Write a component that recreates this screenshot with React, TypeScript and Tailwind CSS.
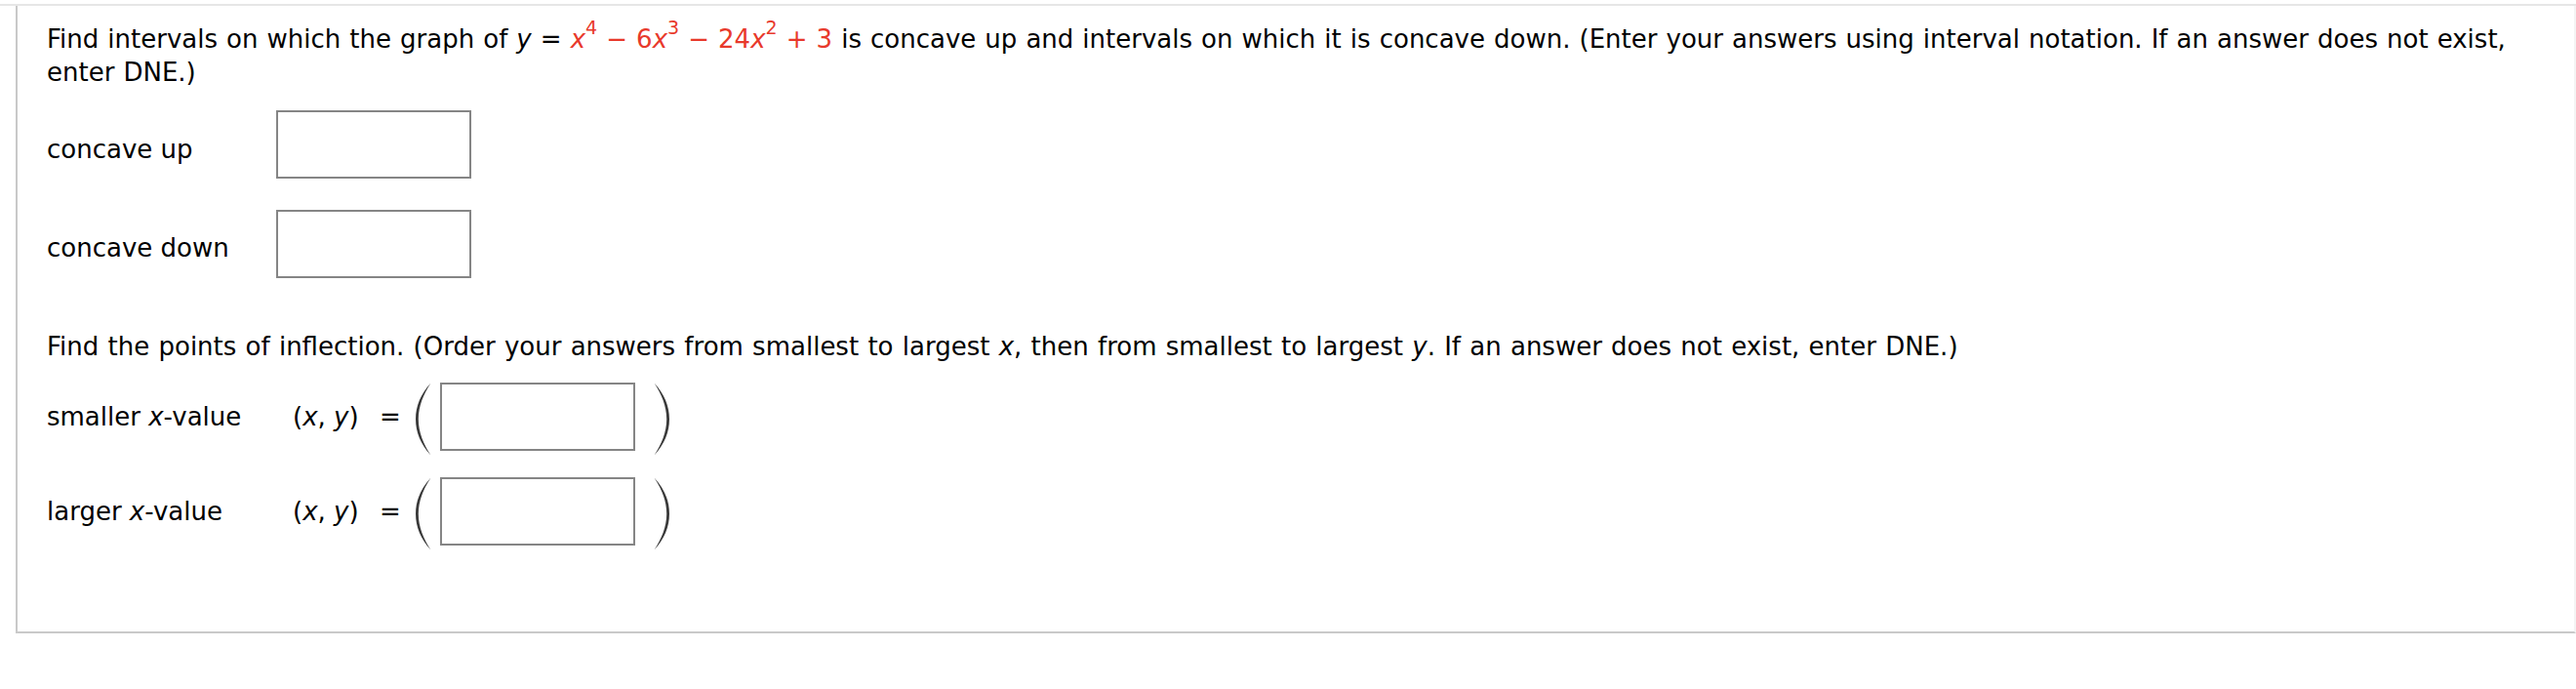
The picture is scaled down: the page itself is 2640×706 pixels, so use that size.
import React from "react";

const RED = "text-[#e8392b]";

const Sup = ({ children }: { children: React.ReactNode }) => (
  <span className="relative -top-[14px] text-[19px] leading-none">
    {children}
  </span>
);

const Paren = ({ side }: { side: "left" | "right" }) => (
  <svg
    width="18"
    height="75"
    viewBox="0 0 18 75"
    className={side === "right" ? "-scale-x-100" : ""}
  >
    <path
      d="M16.5 0.5 C6 12 1 24 1 37.5 C1 51 6 63 16.5 74.5 C9 63 3.8 51 3.8 37.5 C3.8 24 9 12 16.5 0.5 Z"
      fill="#3a3a3a"
    />
  </svg>
);

const AnswerBox = () => (
  <input
    type="text"
    className="h-[70px] w-[200px] border-2 border-[#858585] bg-white outline-none"
  />
);

const IntervalRow = ({ label, offset }: { label: string; offset: string }) => (
  <div className="flex items-start">
    <span className={`w-[235px] ${offset}`}>{label}</span>
    <AnswerBox />
  </div>
);

const PointRow = ({ label }: { label: string }) => (
  <div className="flex h-[75px] items-start">
    <span className="mt-[18px] w-[252px]">
      {label} <i>x</i>-value
    </span>
    <span className="mt-[18px] w-[89px]">
      (<i>x</i>, <i>y</i>)
    </span>
    <span className="mt-[18px]">=</span>
    <div className="ml-[14px] flex items-start">
      <Paren side="left" />
      <div className="ml-[8px]">
        <AnswerBox />
      </div>
      <div className="ml-[18px]">
        <Paren side="right" />
      </div>
    </div>
  </div>
);

export default function App() {
  return (
    <div className="min-h-[706px] bg-white pt-1 font-['DejaVu_Sans','Verdana',sans-serif] text-[26px] leading-[34px] text-black">
      <div className="h-[2px] bg-[#e6e6e6]" />
      <div className="ml-4 border-b-2 border-l-2 border-r-2 border-b-[#c9c9c9] border-l-[#c9c9c9] border-r-[#f4f4f4] pb-[83px] pl-[30px] pr-[40px] pt-[17px]">
        <p className="[word-spacing:0.8px]">
          Find intervals on which the graph of <i>y</i> ={" "}
          <span className={RED}>
            <i>x</i>
            <Sup>4</Sup> − 6<i>x</i>
            <Sup>3</Sup> − 24<i>x</i>
            <Sup>2</Sup> + 3
          </span>{" "}
          is concave up and intervals on which it is concave down. (Enter your
          answers using interval notation. If an answer does not exist, enter
          DNE.)
        </p>

        <div className="mt-[22px] flex flex-col gap-[32px]">
          <IntervalRow label="concave up" offset="mt-[23px]" />
          <IntervalRow label="concave down" offset="mt-[22px]" />
        </div>

        <p className="mt-[53px] [word-spacing:1px]">
          Find the points of inflection. (Order your answers from smallest to
          largest <i>x</i>, then from smallest to largest <i>y</i>. If an answer
          does not exist, enter DNE.)
        </p>

        <div className="mt-[20px] flex flex-col gap-[22px]">
          <PointRow label="smaller" />
          <PointRow label="larger" />
        </div>
      </div>
    </div>
  );
}
